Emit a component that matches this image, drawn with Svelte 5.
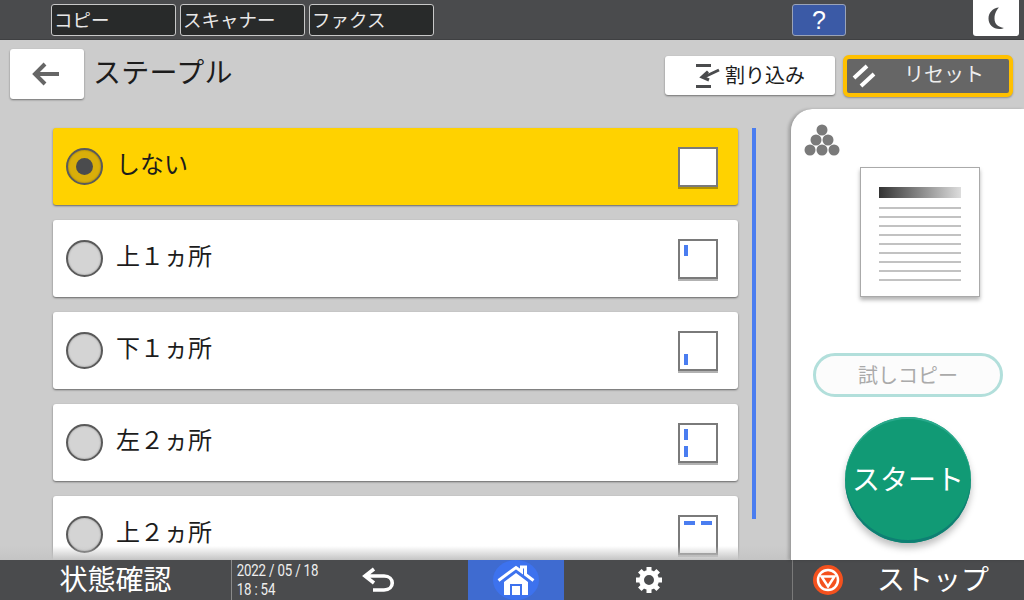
<script>
  const tabs = ['コピー', 'スキャナー', 'ファクス'];
  const rows = [
    { label: 'しない', marks: [], selected: true },
    { label: '上１ヵ所', marks: ['v tl'] },
    { label: '下１ヵ所', marks: ['v bl'] },
    { label: '左２ヵ所', marks: ['v tl', 'v bl'] },
    { label: '上２ヵ所', marks: ['h tl', 'h tr'] }
  ];
</script>

<div class="screen">
  <header class="topbar">
    <div class="tabs">
      {#each tabs as tab}
        <button class="tab"><span>{tab}</span></button>
      {/each}
    </div>
    <button class="help">?</button>
    <button class="moon" aria-label="節電">
      <svg width="22" height="24" viewBox="0 0 22 24">
        <path d="M14 1.500C8 2 3.500 6.500 3.500 12.500S8 23 14.500 23c2 0 3.500-.5 4.500-1-6-1-9.500-4-9.500-9.500S12 3.500 14 1.500z" fill="#4a4b4d" />
      </svg>
    </button>
  </header>

  <main class="main">
    <div class="head">
      <button class="back" aria-label="戻る">
        <svg width="30" height="26" viewBox="0 0 30 26">
          <path d="M15 3 5 13l10 10M5.500 13H29" fill="none" stroke="#666" stroke-width="4" transform="translate(-2 0)" />
        </svg>
      </button>
      <h1>ステープル</h1>
      <button class="interrupt">
        <svg width="26" height="26" viewBox="0 0 26 26">
          <path d="M1 1h15v3H1zM1 22h15v3H1z" fill="#4a4b4d" />
          <path d="M24 7 8 14.500M13 8.500l-6 5.500 7 3" fill="none" stroke="#4a4b4d" stroke-width="3" />
        </svg>
        <span>割り込み</span>
      </button>
      <button class="reset">
        <svg width="24" height="24" viewBox="0 0 24 24">
          <path d="M2 14 15 2M9 22 22 10" fill="none" stroke="#fff" stroke-width="4" />
        </svg>
        <span>リセット</span>
      </button>
    </div>

    <div class="body">
      <div class="list-wrap">
        <ul class="list">
          {#each rows as row}
            <li class="row" class:selected={row.selected}>
              <span class="radio"></span>
              <span class="label">{row.label}</span>
              <span class="thumb">
                {#each row.marks as mark}
                  <i class={mark}></i>
                {/each}
              </span>
            </li>
          {/each}
        </ul>
        <div class="scrollbar"></div>
        <div class="fade"></div>
      </div>

      <aside class="panel">
        <svg class="dots" width="38" height="34" viewBox="0 0 38 34">
          <g fill="#7a7a7a">
            <circle cx="19" cy="7" r="5.500" />
            <circle cx="13" cy="17" r="5.500" />
            <circle cx="25" cy="17" r="5.500" />
            <circle cx="7" cy="27" r="5.500" />
            <circle cx="19" cy="27" r="5.500" />
            <circle cx="31" cy="27" r="5.500" />
          </g>
        </svg>
        <div class="paper">
          <div class="gradient"></div>
          {#each Array(9) as _}
            <div class="line"></div>
          {/each}
        </div>
        <button class="sample"><span>試しコピー</span></button>
        <button class="start"><span>スタート</span></button>
      </aside>
    </div>
  </main>

  <footer class="bottombar">
    <div class="status">状態確認</div>
    <div class="clock">
      <span>2022 / 05 / 18</span>
      <span>18 : 54</span>
    </div>
    <div class="nav undo">
      <svg width="36" height="28" viewBox="0 0 36 28">
        <path d="M13 3 4 10l9 7M5 10h18c11 0 11 14 0 14H12" fill="none" stroke="#fff" stroke-width="3.600" />
      </svg>
    </div>
    <div class="nav home">
      <span class="halo">
        <svg width="38" height="30" viewBox="0 0 38 30">
          <path d="M1.500 15.500 19 2.500l5.500 4V2h4v7.500l8 6" fill="none" stroke="#fff" stroke-width="3" />
          <path d="M7 17 19 8l12 9v13H7zM13 19v11h12V19zM15 21h8v9h-8z" fill="#fff" fill-rule="evenodd" />
        </svg>
      </span>
    </div>
    <div class="nav gear">
      <svg width="28" height="28" viewBox="0 0 28 28">
        <circle cx="14" cy="14" r="7.500" fill="none" stroke="#fff" stroke-width="5" />
        <g stroke="#fff" stroke-width="5">
          <path d="M14 1v5M14 22v5M1 14h5M22 14h5M4.800 4.800l3.500 3.500M19.700 19.700l3.500 3.500M4.800 23.200l3.500-3.500M19.700 8.300l3.500-3.500" />
        </g>
      </svg>
    </div>
    <div class="stop">
      <svg width="30" height="30" viewBox="0 0 30 30">
        <circle cx="15" cy="15" r="15" fill="#f4511e" />
        <circle cx="15" cy="15" r="10" fill="none" stroke="#fff" stroke-width="2.500" />
        <path d="M8.500 11.500h13L15 21.500z" fill="none" stroke="#fff" stroke-width="2.500" />
      </svg>
      <span>ストップ</span>
    </div>
  </footer>
</div>

<style>
  :global(body) {
    margin: 0;
    background: #ccc;
  }

  .screen {
    width: 1024px;
    height: 600px;
    display: flex;
    flex-direction: column;
    overflow: hidden;
    font-family: "Noto Sans CJK JP", "Noto Sans", sans-serif;
    background: #ccc;
    color: #1c1c1c;
  }

  button {
    font-family: inherit;
    padding: 0;
    border: none;
  }

  .topbar {
    flex: 0 0 40px;
    box-sizing: border-box;
    display: flex;
    align-items: flex-start;
    background: #4a4b4d;
    padding: 4px 5px 0 51px;
    border-bottom: 1px solid #3f4042;
  }

  .tabs { display: flex; gap: 4px; }

  .tab {
    width: 125px;
    height: 32px;
    box-sizing: border-box;
    background: #282a2a;
    border: 1px solid #c8c8c8;
    border-radius: 3px;
    color: #e8e8e8;
    font-size: 18.500px;
    line-height: 28px;
    text-align: left;
    padding-left: 2px;
  }

  .tab span {
    display: block;
    margin-top: -3px;
  }

  .help {
    width: 54px;
    height: 32px;
    margin-left: 358px;
    box-sizing: border-box;
    background: #3b5aa6;
    border: 1px solid #9aa3b8;
    border-radius: 3px;
    color: #fff;
    font: 400 25px "Liberation Sans", sans-serif;
  }

  .moon {
    width: 46px;
    height: 36px;
    margin: -4px 0 0 127px;
    background: #fff;
    border-radius: 0 0 3px 3px;
    display: flex;
    align-items: center;
    justify-content: center;
  }

  .main {
    flex: 0 0 520px;
    min-height: 0;
    display: flex;
    flex-direction: column;
  }

  .head {
    flex: 0 0 69px;
    display: flex;
    align-items: flex-start;
    padding-left: 10px;
  }

  .back {
    width: 74px;
    height: 50px;
    margin-top: 9px;
    background: #fff;
    border-radius: 3px;
    box-shadow: 0 1px 2px rgba(0, 0, 0, 0.45);
    display: flex;
    align-items: center;
    justify-content: center;
  }

  h1 {
    margin: 9px auto 0 9px;
    font-size: 28px;
    font-weight: 400;
    line-height: 44px;
    letter-spacing: 0.3px;
    color: #1c1c1c;
  }

  .interrupt {
    width: 170px;
    height: 39px;
    margin-top: 16px;
    background: #fff;
    border-radius: 3px;
    box-shadow: 0 1px 2px rgba(0, 0, 0, 0.45);
    display: flex;
    align-items: center;
    justify-content: center;
    gap: 4px;
    font-size: 20px;
    color: #1c1c1c;
  }

  .interrupt span { margin-top: -2px; }

  .reset {
    width: 170px;
    height: 42px;
    margin: 15px 11px 0 8px;
    box-sizing: border-box;
    background: #666;
    border: 4px solid #ffc000;
    border-radius: 6px;
    box-shadow: 0 1px 2px rgba(0, 0, 0, 0.3);
    color: #eee;
    font-size: 20px;
    display: flex;
    align-items: center;
    padding-left: 5px;
    gap: 28px;
  }

  .reset span { margin-top: -5px; }

  .body {
    flex: 1;
    display: flex;
    min-height: 0;
  }

  .list-wrap {
    width: 790px;
    position: relative;
    overflow: hidden;
  }

  .list {
    list-style: none;
    margin: 19px 0 0 53px;
    padding: 0;
    width: 685px;
    display: flex;
    flex-direction: column;
    gap: 15px;
  }

  .row {
    flex: 0 0 77px;
    box-sizing: border-box;
    display: flex;
    align-items: center;
    padding: 0 20px 0 13px;
    background: #fff;
    border-radius: 3px;
    box-shadow: 0 1px 2px rgba(0, 0, 0, 0.5);
  }

  .row.selected { background: #ffd200; }

  .radio {
    width: 37px;
    height: 37px;
    box-sizing: border-box;
    border-radius: 50%;
    background: #d4d4d4;
    border: 2px solid #5a5a5a;
    box-shadow: inset 0 0 2px rgba(0, 0, 0, 0.35);
    display: flex;
    align-items: center;
    justify-content: center;
  }

  .selected .radio { background: #d9ae0a; }

  .selected .radio::after {
    content: '';
    width: 17px;
    height: 17px;
    border-radius: 50%;
    background: #4a4b4d;
  }

  .label {
    flex: 1;
    margin-left: 13px;
    font-size: 24px;
    line-height: 1;
    margin-top: -8px;
  }

  .thumb {
    width: 40px;
    height: 40px;
    box-sizing: border-box;
    position: relative;
    background: #fff;
    border: 2px solid #7a7a7a;
    box-shadow: 0 2px 0 rgba(0, 0, 0, 0.3);
  }

  .thumb i {
    position: absolute;
    background: #4a7df0;
  }

  .thumb .v { width: 4px; height: 11px; left: 4px; }
  .thumb .h { width: 11px; height: 4px; top: 4px; }
  .thumb .v.tl { top: 4px; }
  .thumb .v.bl { bottom: 4px; }
  .thumb .h.tl { left: 4px; }
  .thumb .h.tr { right: 4px; }

  .scrollbar {
    position: absolute;
    left: 752px;
    top: 19px;
    width: 4px;
    height: 391px;
    background: #4a7df0;
  }

  .fade {
    position: absolute;
    left: 0;
    right: 0;
    bottom: 0;
    height: 14px;
    background: linear-gradient(to bottom, rgba(204, 204, 204, 0), #c4c4c4);
  }

  .panel {
    flex: 1;
    position: relative;
    background: #fff;
    border-left: 1px solid #a0a0a0;
    border-radius: 22px 0 0 0;
    box-shadow: -2px 0 3px rgba(0, 0, 0, 0.18);
    display: flex;
    flex-direction: column;
    align-items: center;
    padding-top: 58px;
    box-sizing: border-box;
  }

  .dots {
    position: absolute;
    left: 12px;
    top: 14px;
  }

  .paper {
    width: 120px;
    height: 130px;
    box-sizing: border-box;
    border: 1px solid #aaa;
    box-shadow: 0 3px 4px rgba(0, 0, 0, 0.3);
    padding: 19px 18px 0;
    display: flex;
    flex-direction: column;
    background: #fff;
    margin-left: 25px;
  }

  .gradient {
    height: 11px;
    background: linear-gradient(to right, #333, #ddd);
    margin-bottom: 9px;
  }

  .line {
    flex: 0 0 2px;
    background: #c2c2c2;
    margin-bottom: 7px;
  }

  .sample {
    width: 190px;
    height: 44px;
    margin-top: 56px;
    margin-left: 1px;
    box-sizing: border-box;
    border: 3px solid #b2dfdb;
    border-radius: 22px;
    background: #fcfcfc;
    color: #aaa;
    font-size: 20px;
  }

  .sample span {
    display: block;
    margin-top: -2px;
  }

  .start {
    width: 126px;
    height: 126px;
    margin-top: 20px;
    margin-left: 1px;
    border-radius: 50%;
    background: #119a75;
    color: #fff;
    font-size: 28px;
    box-shadow: inset 0 2px 0 #2aa98c, inset 0 -3px 0 #0e7f73, 0 5px 7px rgba(0, 0, 0, 0.25);
  }

  .start span {
    display: block;
    margin-top: -5px;
  }

  .bottombar {
    flex: 0 0 40px;
    display: flex;
    background: #4a4b4d;
    color: #fff;
  }

  .status {
    width: 231px;
    font-size: 28px;
    line-height: 36px;
    text-align: center;
    border-right: 1px solid #8a8a8a;
  }

  .clock {
    width: 116px;
    box-sizing: border-box;
    padding: 1px 0 0 6px;
    display: flex;
    flex-direction: column;
    font: 400 17px/19px Roboto, sans-serif;
    color: #eee;
    letter-spacing: -0.2px;
    transform: scaleX(0.78);
    transform-origin: left;
  }

  .nav {
    display: flex;
    align-items: center;
    justify-content: center;
  }

  .undo {
    width: 60px;
    padding-left: 2px;
    box-sizing: border-box;
  }

  .home {
    width: 96px;
    margin-left: 60px;
    background: #3f6bd0;
  }

  .halo {
    width: 46px;
    height: 40px;
    border-radius: 50%;
    background: #3d72ee;
    display: flex;
    align-items: center;
    justify-content: center;
  }

  .gear {
    width: 170px;
    margin-right: 58px;
  }

  .stop {
    flex: 1;
    display: flex;
    align-items: center;
    border-left: 1px solid #7a7a7a;
    padding-left: 20px;
    gap: 34px;
    font-size: 28px;
  }

  .stop span { line-height: 36px; margin-top: -4px; }
</style>
